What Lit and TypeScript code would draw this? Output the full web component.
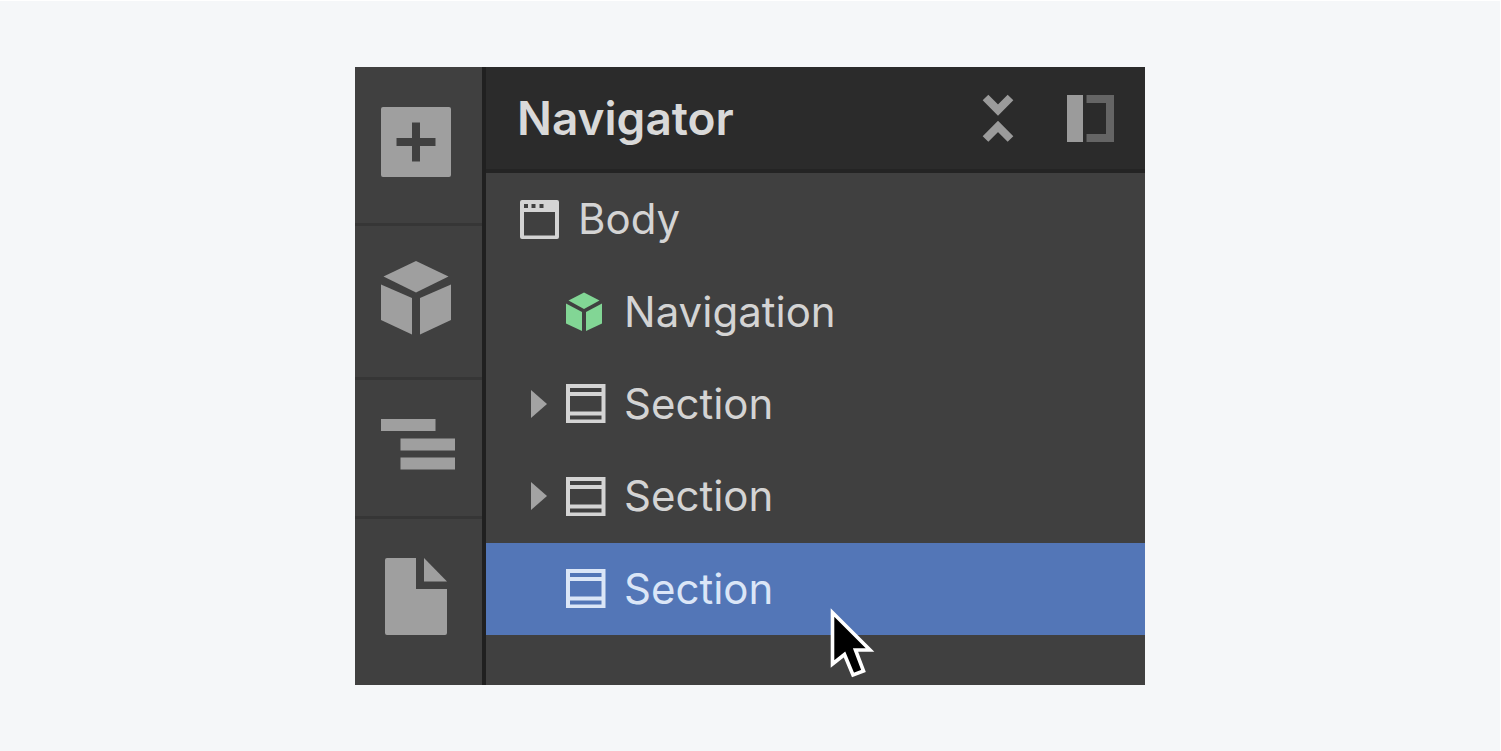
import { LitElement, html, css, svg, nothing } from "lit";
import { customElement, property, state } from "lit/decorators.js";
import { classMap } from "lit/directives/class-map.js";

type NodeKind = "body" | "component" | "section";

interface TreeNode {
  label: string;
  kind: NodeKind;
  child: boolean;
  expandable: boolean;
}

const NODES: TreeNode[] = [
  { label: "Body", kind: "body", child: false, expandable: false },
  { label: "Navigation", kind: "component", child: true, expandable: false },
  { label: "Section", kind: "section", child: true, expandable: true },
  { label: "Section", kind: "section", child: true, expandable: true },
  { label: "Section", kind: "section", child: true, expandable: false },
];

const cube = svg`
  <path d="M35 0 L67.5 15.5 L35 31.5 L2.5 15.5 Z"/>
  <path d="M0 23.5 L31 37 V73.5 L0 59 Z"/>
  <path d="M70 23.5 L39 37 V73.5 L70 59 Z"/>`;

const kindIcons = {
  body: html`<svg width="40" height="39" viewBox="0 0 40 39" aria-hidden="true">
    <path fill-rule="evenodd" d="M2 0H37Q39 0 39 2V37Q39 39 37 39H2Q0 39 0 37V2Q0 0 2 0Z
      M4 12V35.5H35V12Z M4 4V8H8V4Z M11.5 4V8H15.5V4Z M19.5 4V8H23.5V4Z"/>
  </svg>`,
  component: html`<svg class="green" width="40" height="40" viewBox="0 0 40 40" aria-hidden="true">
    <path d="M18 .5 L33.5 8.5 L18 17 L2.5 8.5 Z"/>
    <path d="M0 11.5 L16 20 V39 L0 31.5 Z"/>
    <path d="M36 11.5 L20 20 V39 L36 31.5 Z"/>
  </svg>`,
  section: html`<svg width="40" height="39" viewBox="0 0 40 39" aria-hidden="true">
    <path fill-rule="evenodd" d="M0 0H39.5V39H0Z M4 4V8H35.5V4Z M4 12V27.5H35.5V12Z M4 31.5V35.5H35.5V31.5Z"/>
  </svg>`,
};

@customElement("tree-row")
class TreeRow extends LitElement {
  @property({ attribute: false }) node!: TreeNode;
  @property({ type: Boolean, reflect: true }) selected = false;

  static styles = css`
    :host {
      display: flex;
      align-items: center;
      color: #d4d4d4;
    }
    :host([selected]) {
      background: #5376b7;
      color: #dbe6f7;
    }
    button {
      margin: 0;
      padding: 0;
      border: 0;
      background: none;
      color: inherit;
      font: inherit;
    }
    .gutter {
      flex: none;
      display: flex;
      justify-content: flex-end;
      box-sizing: border-box;
      width: 34px;
    }
    .gutter.child {
      width: 80px;
      padding-right: 19px;
    }
    .toggle {
      display: flex;
      color: #a3a3a3;
    }
    .item {
      flex: 1;
      align-self: stretch;
      display: flex;
      align-items: center;
      gap: 18px;
      text-align: left;
    }
    svg {
      display: block;
      flex: none;
      fill: currentColor;
    }
    .green {
      fill: #82d695;
    }
  `;

  render() {
    const n = this.node;
    return html`
      <span class=${classMap({ gutter: true, child: n.child })}>
        ${n.expandable
          ? html`<button class="toggle" aria-label="Expand" aria-expanded="false">
              <svg width="16" height="28" viewBox="0 0 16 28" aria-hidden="true"><path d="M0 0 L16 14 L0 28 Z"/></svg>
            </button>`
          : nothing}
      </span>
      <button class="item">${kindIcons[n.kind]}<span>${n.label}</span></button>
    `;
  }
}

@customElement("app-root")
class AppRoot extends LitElement {
  @state() private selected = 4;

  static styles = css`
    :host {
      display: flex;
      align-items: center;
      justify-content: center;
      box-sizing: border-box;
      min-height: 100vh;
      border-top: 1px solid #fff;
      border-right: 1px solid #fff;
      background: #f5f7f9;
      font-family: Inter, "Liberation Sans", sans-serif;
    }
    button {
      margin: 0;
      padding: 0;
      border: 0;
      background: none;
      color: inherit;
      font: inherit;
    }
    svg {
      display: block;
      fill: currentColor;
    }
    .panel {
      position: relative;
      display: flex;
      width: 100%;
      max-width: 790px;
      background: #404040;
    }
    .rail {
      flex: none;
      box-sizing: border-box;
      width: 131px;
      display: flex;
      flex-direction: column;
      border-right: 4px solid #202020;
      color: #9f9f9f;
    }
    .tool {
      display: flex;
      padding: 38px 26px;
      border-bottom: 3px solid #363636;
    }
    .tool.first {
      padding: 40px 26px 46px;
    }
    .tool.middle {
      padding: 35px 26px 42px;
    }
    .tool.last {
      padding: 38px 30px;
      border-bottom: 0;
    }
    .main {
      flex: 1;
      min-width: 0;
      padding-bottom: 50px;
    }
    header {
      display: flex;
      align-items: center;
      box-sizing: border-box;
      height: 106px;
      padding: 0 31px;
      border-bottom: 4px solid #242424;
      background: #2b2b2b;
      color: #9b9b9b;
    }
    h1 {
      flex: 1;
      margin: 0;
      font-size: 46px;
      line-height: 56px;
      font-weight: 600;
      color: #d9d9d9;
    }
    .actions {
      display: flex;
      align-items: center;
      gap: 53px;
    }
    .tree {
      display: grid;
      grid-template-rows: repeat(5, 1fr);
      height: 462px;
      font-size: 42px;
      line-height: 52px;
    }
    .cursor {
      position: absolute;
      left: 474px;
      top: 539px;
      pointer-events: none;
      overflow: visible;
    }
  `;

  render() {
    return html`
      <section class="panel">
        <nav class="rail" aria-label="Tools">
          <button class="tool first" aria-label="Add">
            <svg width="70" height="70" viewBox="0 0 70 70" aria-hidden="true">
              <path fill-rule="evenodd" d="M2 0H68Q70 0 70 2V68Q70 70 68 70H2Q0 70 0 68V2Q0 0 2 0Z
                M31 15.5V31H15.5V39H31V54.5H39V39H54.5V31H39V15.5Z"/>
            </svg>
          </button>
          <button class="tool middle" aria-label="Components">
            <svg width="70" height="74" viewBox="0 0 70 74" aria-hidden="true">${cube}</svg>
          </button>
          <button class="tool" aria-label="Navigator">
            <svg width="74" height="60" viewBox="0 0 74 60" aria-hidden="true">
              <path d="M0 1H54.5V13H0Z M19.5 20.5H74V32.5H19.5Z M19.5 39.5H74V51.5H19.5Z"/>
            </svg>
          </button>
          <button class="tool last" aria-label="Pages">
            <svg width="62" height="78" viewBox="0 0 62 78" aria-hidden="true">
              <path d="M2 1H31V32H62V76Q62 78 60 78H2Q0 78 0 76V3Q0 1 2 1Z"/>
              <path d="M39 1L62 24.5H39Z"/>
            </svg>
          </button>
        </nav>
        <div class="main">
          <header>
            <h1>Navigator</h1>
            <div class="actions">
              <button aria-label="Collapse all">
                <svg width="32" height="50" viewBox="0 0 32 50" aria-hidden="true">
                  <path d="M3.5 4.5L16 17L28.5 4.5M3.5 46L16 33.5L28.5 46" fill="none" stroke="currentColor" stroke-width="8"/>
                </svg>
              </button>
              <button aria-label="Dock panel">
                <svg width="47" height="47" viewBox="0 0 47 47" aria-hidden="true">
                  <path d="M0 0H16V47H0Z"/>
                  <path fill="#656565" d="M19.5 0H47V47H19.5V39H39V8H19.5Z"/>
                </svg>
              </button>
            </div>
          </header>
          <div class="tree">
            ${NODES.map(
              (n, i) => html`<tree-row .node=${n} ?selected=${i === this.selected}
                @click=${() => (this.selected = i)}></tree-row>`
            )}
          </div>
        </div>
        <svg class="cursor" width="46" height="73" viewBox="0 0 46 73" aria-hidden="true">
          <path d="M3.5 6.5 V58 L15.5 48.5 L24 69 L34.5 65 L26.5 44 H41 Z" fill="#000" stroke="#fff" stroke-width="3.6"/>
        </svg>
      </section>
    `;
  }
}
